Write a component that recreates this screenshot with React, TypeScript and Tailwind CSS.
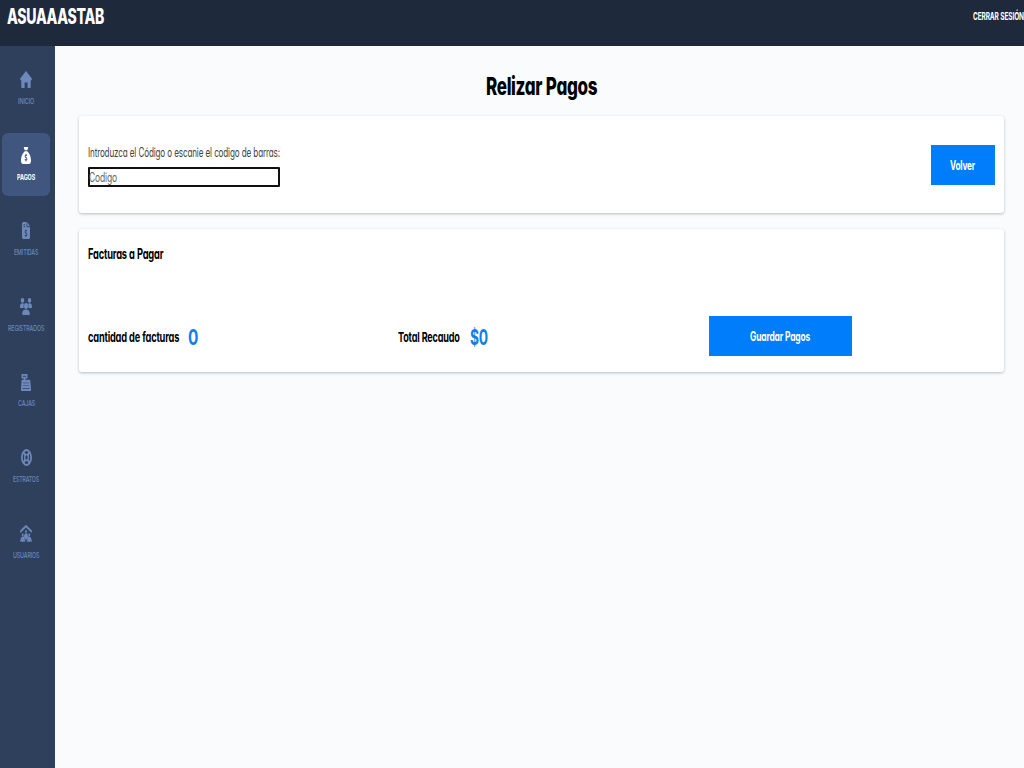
import { useLayoutEffect, useRef, useState, type ReactNode } from "react";
import { FaSackDollar, FaFileInvoiceDollar, FaPeopleRoof } from "react-icons/fa6";

/** Condenses a line of text so that it fills the width of its box. */
function Fit({ className, children }: { className: string; children: ReactNode }) {
  const box = useRef<HTMLDivElement>(null);
  const text = useRef<HTMLSpanElement>(null);
  const [scale, setScale] = useState(1);
  useLayoutEffect(() => {
    if (box.current && text.current) {
      setScale(box.current.getBoundingClientRect().width / text.current.offsetWidth);
    }
  }, []);
  return (
    <div ref={box} className={"shrink-0 whitespace-nowrap " + className}>
      <span ref={text} className="inline-block origin-left tracking-[-0.02em] [word-spacing:0.02em]" style={{ transform: `scaleX(${scale})` }}>
        {children}
      </span>
    </div>
  );
}

const HomeIcon = () => (
  <svg viewBox="0 0 12 16" preserveAspectRatio="none" className="h-[17px] w-3" fill="currentColor">
    <path d="M6 0 12 7.4 11.5 8.7H10.7V15.3Q10.7 16 10.1 16H7.6V10.8H4.6V16H1.9Q1.3 16 1.3 15.3V8.7H.5L0 7.4Z" />
  </svg>
);

const GroupIcon = () => (
  <svg viewBox="0 0 24 32" preserveAspectRatio="none" className="h-[17px] w-[12px]" fill="currentColor">
    <ellipse cx="5" cy="4.500" rx="3.500" ry="4.500" />
    <ellipse cx="19" cy="4.500" rx="3.500" ry="4.500" />
    <path d="M0 17c0-5 2-7 5-7 1.500 0 2.500.5 3.400 1.400C7 13 6.600 16 7.500 19H1Q0 19 0 17ZM24 17c0-5-2-7-5-7-1.500 0-2.500.5-3.400 1.400C17 13 17.400 16 16.500 19H23Q24 19 24 17Z" />
    <ellipse cx="12" cy="15" rx="4" ry="5.500" />
    <path d="M4.500 30c0-6 2.500-8.500 7.500-8.500s7.500 2.500 7.500 8.500q0 2-1.500 2H6Q4.500 32 4.500 30Z" />
  </svg>
);

const RegisterIcon = () => (
  <svg viewBox="0 0 10 16" preserveAspectRatio="none" className="h-[17px] w-[10px]" fill="currentColor">
    <path fillRule="evenodd" d="M1 0h5q.5 0 .5.600v3q0 .6-.5.6H4.200v1.300h4.300q.7 0 .8 1l.7 6.800v1.700q0 1-.8 1H.8q-.8 0-.8-1v-1.700l.6-6.800q.1-1 .8-1h1.300V4.200H1q-.5 0-.5-.6v-3Q.5 0 1 0ZM1.800 1.600v.9h3.400v-.9ZM2 8.200v.6h6v-.6ZM2 10.500v.6h6v-.6ZM1.500 13.500v.7h7v-.7Z" />
  </svg>
);

const RingIcon = () => (
  <svg viewBox="0 0 24 32" preserveAspectRatio="none" className="h-[17px] w-[11px]" fill="none" stroke="currentColor">
    <ellipse cx="12" cy="16" rx="10" ry="14" strokeWidth="3.800" />
    <ellipse cx="12" cy="16" rx="4" ry="5.500" strokeWidth="2.800" />
    <path d="M5 6l5 6M19 6l-5 6M5 26l5-6M19 26l-5-6" strokeWidth="4" />
  </svg>
);

const items = [
  { label: "INICIO", width: "w-[16px]", icon: <HomeIcon /> },
  { label: "PAGOS", width: "w-[18px]", icon: <FaSackDollar preserveAspectRatio="none" className="h-[17px] w-[10px]" />, active: true },
  { label: "EMITIDAS", width: "w-[24px]", icon: <FaFileInvoiceDollar preserveAspectRatio="none" className="h-[17px] w-[8px]" /> },
  { label: "REGISTRADOS", width: "w-[36px]", icon: <GroupIcon /> },
  { label: "CAJAS", width: "w-[17px]", icon: <RegisterIcon /> },
  { label: "ESTRATOS", width: "w-[26px]", icon: <RingIcon /> },
  { label: "USUARIOS", width: "w-[26px]", icon: <FaPeopleRoof preserveAspectRatio="none" stroke="currentColor" strokeWidth="14" className="h-[17px] w-[12px]" /> },
];

export default function App() {
  return (
    <div className="flex h-[768px] w-[1024px] flex-col overflow-hidden bg-[#f9fbfd] font-['Inter','Liberation_Sans',sans-serif] text-black [font-feature-settings:'cv11']">
      <header className="flex h-[45.500px] shrink-0 justify-between bg-[#1e293b] pl-[7px] text-white">
        <Fit className="mt-[3px] w-[97px] text-[21px] leading-[28px] font-extrabold">ASUAAASTAB</Fit>
        <Fit className="mt-[9px] w-[51px] text-[10.500px] leading-[16px] font-bold">CERRAR SESIÓN</Fit>
      </header>
      <div className="flex min-h-0 flex-1">
        <nav className="flex w-[54.500px] shrink-0 flex-col gap-[12.600px] bg-[#2e405c] pt-[12px] pl-[2px]">
          {items.map((item) => (
            <div
              key={item.label}
              className={
                "flex h-[63px] w-12 shrink-0 flex-col items-center rounded-[6px] pt-[13.800px] " +
                (item.active ? "bg-[#41567f] text-white" : "text-[#6d89bb]")
              }
            >
              <div className="flex h-[17px] items-center">{item.icon}</div>
              <Fit className={"mt-[8.700px] text-[7.500px] leading-[10px] " + item.width + (item.active ? " font-bold" : " font-medium")}>
                {item.label}
              </Fit>
            </div>
          ))}
        </nav>
        <main className="flex flex-1 flex-col pr-[20px] pl-[24.500px]">
          <h1 className="flex h-[70px] justify-center pt-[23px]">
            <Fit className="w-[111px] text-[25px] leading-[34px] font-extrabold">Relizar Pagos</Fit>
          </h1>
          <section className="flex h-[97.500px] shrink-0 items-start justify-between rounded-[3px] bg-white pr-[9.500px] pl-[9px] shadow-[0_1px_3px_rgba(0,0,0,0.26)]">
            <label className="flex flex-col pt-[27px]">
              <Fit className="w-[192px] text-[12.500px] leading-[20px] text-[#444]">
                Introduzca el Código o escanie el codigo de barras:
              </Fit>
              <div className="mt-[4.500px] flex h-[20px] w-[192px] items-center rounded-[1px] border-2 border-[#101010] bg-white">
                <Fit className="mt-[2px] -ml-px w-[28px] text-[12.500px] leading-[16px] text-[#666]">Codigo</Fit>
              </div>
            </label>
            <button className="mt-[29.500px] flex h-[40px] w-[63.500px] items-center justify-center bg-[#007dfa] text-white">
              <Fit className="mt-px w-[25px] text-[12.500px] leading-[20px] font-bold">Volver</Fit>
            </button>
          </section>
          <section className="mt-[15.500px] flex h-[143px] shrink-0 flex-col rounded-[3px] bg-white pl-[9px] shadow-[0_1px_3px_rgba(0,0,0,0.26)]">
            <Fit className="mt-[15px] w-[75px] text-[14px] leading-[20px] font-bold">Facturas a Pagar</Fit>
            <div className="mt-[52px] grid h-[40px] grid-cols-[310px_310.500px_1fr] items-center">
              <div className="flex items-center gap-[9px]">
                <Fit className="mt-[2px] w-[91px] text-[13.500px] leading-[20px] font-bold">cantidad de facturas</Fit>
                <Fit className="mt-[2px] w-[10px] text-[21.500px] leading-[28px] font-bold text-[#1080e8]">0</Fit>
              </div>
              <div className="flex items-center gap-[10px]">
                <Fit className="mt-[2px] w-[62px] text-[13.500px] leading-[20px] font-bold">Total Recaudo</Fit>
                <Fit className="mt-[2px] w-[18px] text-[21.500px] leading-[28px] font-bold text-[#1080e8]">$0</Fit>
              </div>
              <button className="flex h-[40px] w-[143px] items-center justify-center bg-[#007dfa] text-white">
                <Fit className="mt-[2px] w-[60px] text-[12.500px] leading-[20px] font-bold">Guardar Pagos</Fit>
              </button>
            </div>
          </section>
        </main>
      </div>
    </div>
  );
}
